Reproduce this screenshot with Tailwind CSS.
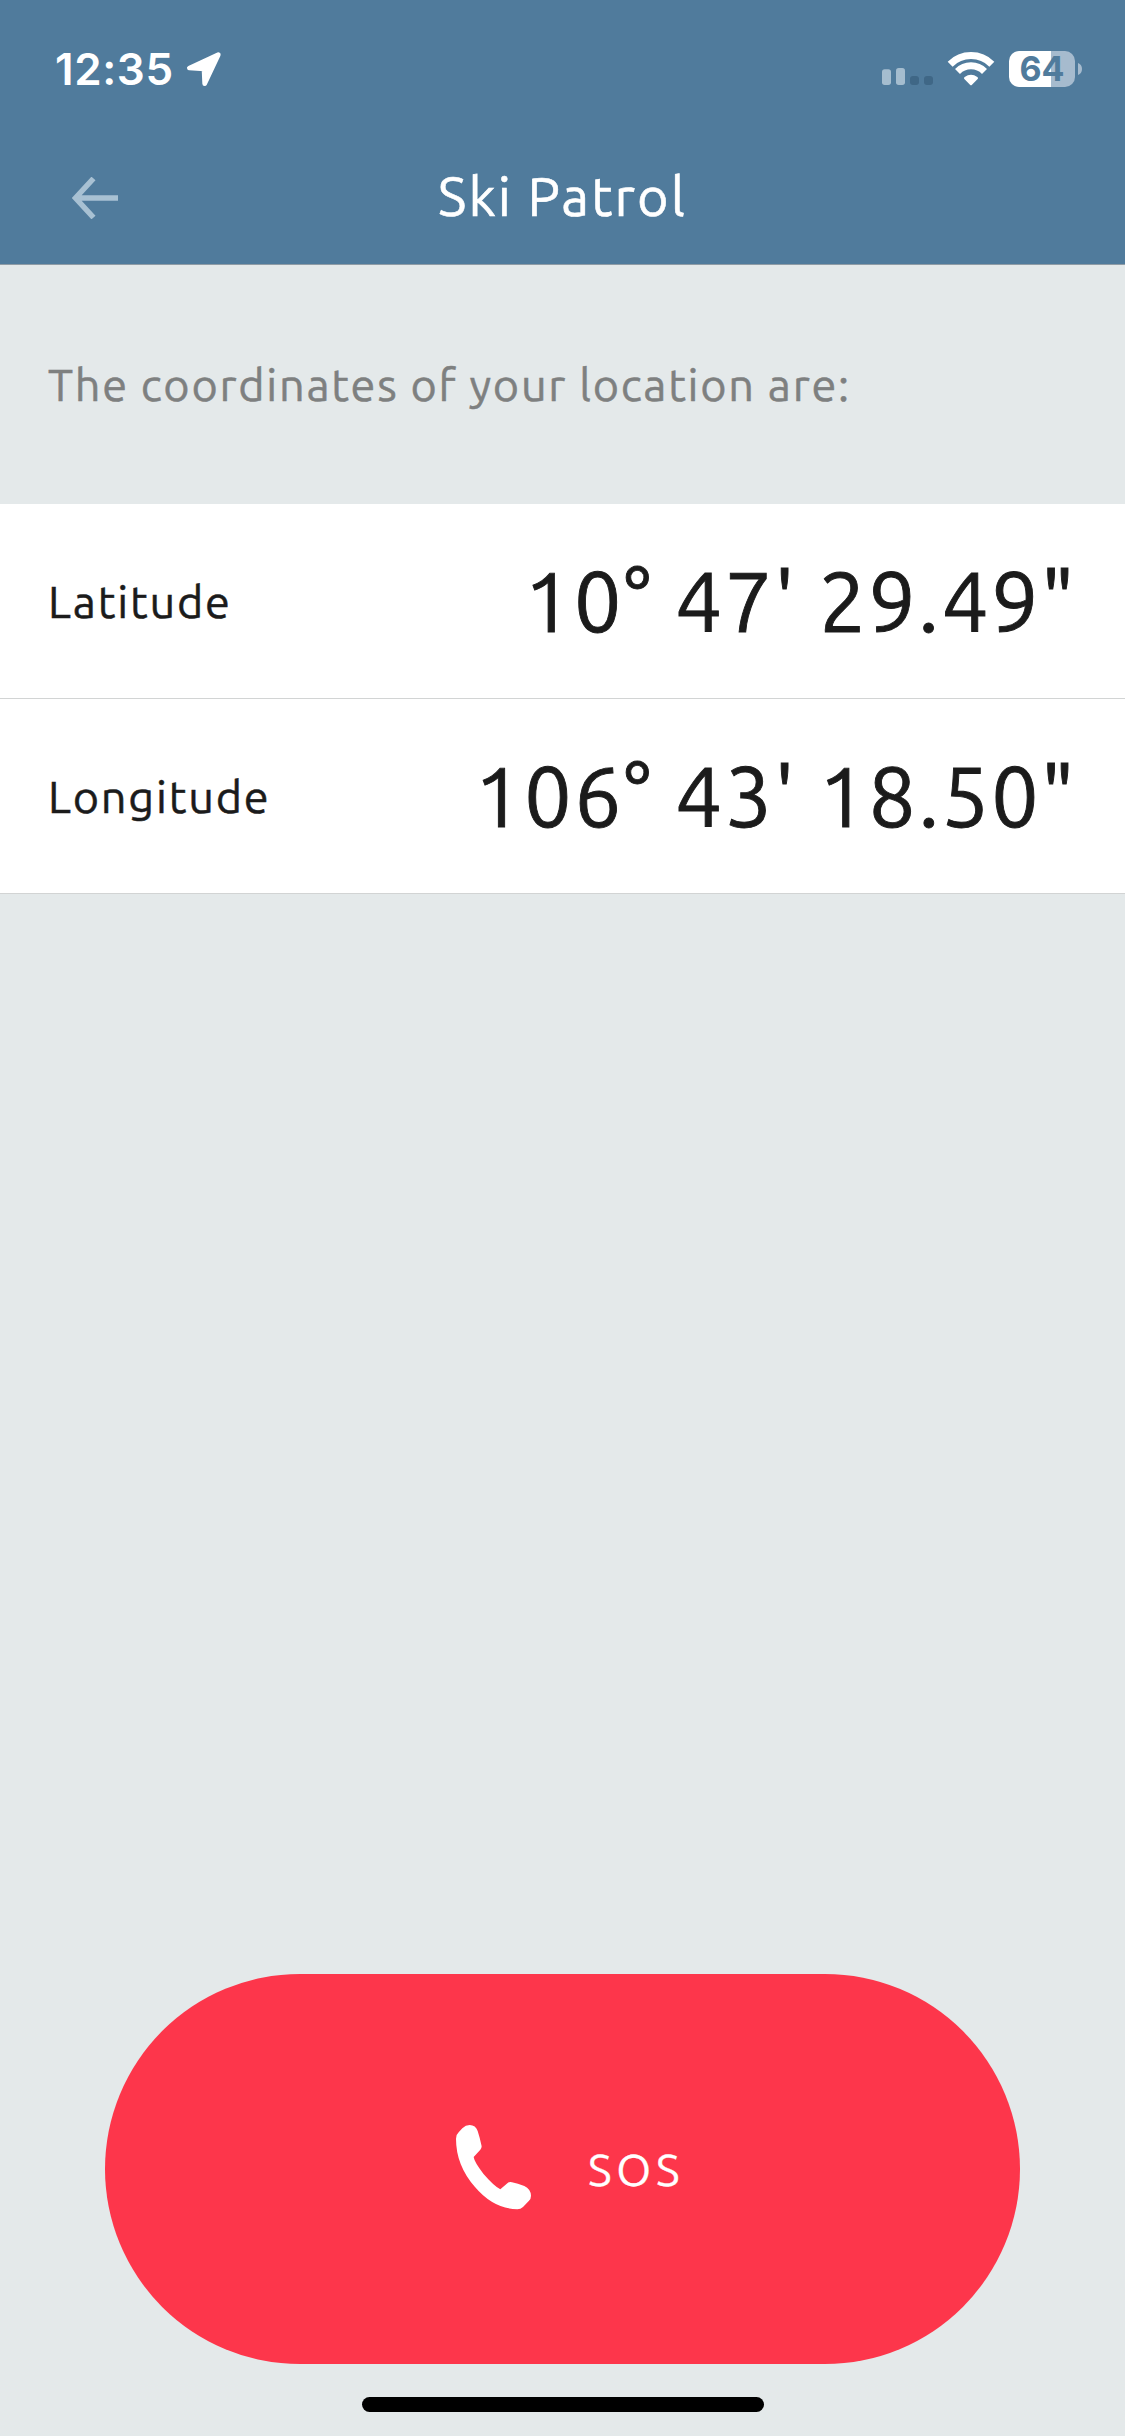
<!DOCTYPE html>
<html lang="en">
<head>
<meta charset="utf-8">
<title>Ski Patrol</title>
<script src="https://cdn.jsdelivr.net/npm/@tailwindcss/browser@4"></script>
</head>
<body class="bg-[#e4e9ea]">
<div class="flex h-[2436px] w-[1125px] flex-col overflow-hidden bg-[#e4e9ea] font-['Ubuntu','Noto_Sans',sans-serif] text-[#1b1b1b]">
  <header class="h-[265px] shrink-0 border-b border-[#8f9ca6] bg-[#507b9c] text-white">
    <!-- Status bar -->
    <div class="flex h-[138px] items-center justify-between pr-[43px] pl-[55px]">
      <div class="flex items-center gap-[12px]">
        <span class="font-['Inter',sans-serif] text-[44px] leading-none font-semibold tracking-[0.6px]">12:35</span>
        <svg class="h-[36px] w-[36px]" viewBox="466 65 108 108" fill="#fff" stroke="#fff" stroke-width="14" stroke-linejoin="round"><path d="M563 76L476 116L520 119L522 163Z"/></svg>
      </div>
      <div class="flex items-center">
        <svg class="h-[36px] w-[140px]" viewBox="66 63 420 108">
          <g fill="#a5bdcf"><rect x="66" y="118" width="27" height="47" rx="8"/><rect x="108" y="114" width="27" height="51" rx="8"/></g>
          <g fill="#3f6786"><rect x="150" y="138" width="27" height="27" rx="9"/><rect x="192" y="138" width="27" height="27" rx="9"/></g>
          <g fill="none" stroke="#fff" stroke-width="21"><path d="M270.500 102.500A88.500 88.500 0 0 1 395.500 102.500"/><path d="M292.500 124.500A57 57 0 0 1 373.500 124.500"/></g>
          <path fill="#fff" d="M313 147Q310 144 314 141Q333 127 352 141Q356 144 353 147L336 164Q333 167 330 164Z"/>
        </svg>
        <div class="-ml-[13px] flex h-[36px] w-[66px] items-center justify-center rounded-[10px] bg-linear-to-r from-white from-[63.5%] to-[#a6bbce] to-[63.5%] font-['Inter',sans-serif] text-[34px] leading-none font-bold text-[#507b9c]">64</div>
        <svg class="ml-[3px] h-[12px] w-[4px]" viewBox="0 0 4 12" fill="#a6bbce"><path d="M0 0Q4 1.500 4 6Q4 10.500 0 12Z"/></svg>
      </div>
    </div>
    <!-- Navigation bar -->
    <div class="grid h-[120px] grid-cols-[1fr_auto_1fr] items-center px-[72px]">
      <svg class="h-[42px] w-[46px]" viewBox="0 0 46 42" fill="none" stroke="#a8c1d3" stroke-width="5.500"><path d="M46 21H6M21.500 1.500L3.500 21L21.500 40.500"/></svg>
      <h1 class="pb-[4px] text-[54px] leading-none tracking-[2.1px] [-webkit-text-stroke:0.6px_currentColor]">Ski Patrol</h1>
      <span></span>
    </div>
  </header>

  <p class="flex h-[239px] shrink-0 items-center pl-[48px] text-[45px] leading-none tracking-[1.74px] text-[#7e8080] [-webkit-text-stroke:0.5px_currentColor]">The coordinates of your location are:</p>

  <dl class="shrink-0 bg-white">
    <div class="flex h-[195px] items-center justify-between border-b border-[#d2d4d4] pr-[48px] pl-[48px]">
      <dt class="text-[45px] leading-none tracking-[1.8px] [-webkit-text-stroke:0.5px_currentColor]">Latitude</dt>
      <dd class="text-[84px] leading-none tracking-[2.4px] [-webkit-text-stroke:0.9px_currentColor]">10° 47' 29.49"</dd>
    </div>
    <div class="flex h-[195px] items-center justify-between border-b border-[#d2d4d4] pr-[48px] pl-[48px]">
      <dt class="text-[45px] leading-none tracking-[1.8px] [-webkit-text-stroke:0.5px_currentColor]">Longitude</dt>
      <dd class="text-[84px] leading-none tracking-[2.4px] [-webkit-text-stroke:0.9px_currentColor]">106° 43' 18.50"</dd>
    </div>
  </dl>

  <div class="mt-auto flex flex-col items-center gap-[33px] pb-[24px]">
    <button class="flex h-[390px] w-[915px] items-center gap-[57px] rounded-full bg-[#fd364b] pl-[351px] text-white">
      <svg class="h-[89px] w-[75px]" viewBox="78 104 225 267" fill="#fff"><path d="M78 145Q78 133 86 126L97 114Q107 104 119 104Q137 104 143 122Q149 140 155 168Q155 173 151 178L131 200Q133 215 160 250Q190 285 211 297L233 278Q238 274 246 276Q263 280 283 287Q302 296 303 316Q303 325 297 331L279 350Q272 357 262 357Q190 355 135 290Q78 225 78 145Z"/></svg>
      <span class="text-[45px] leading-none tracking-[4.75px] [-webkit-text-stroke:0.3px_currentColor]">SOS</span>
    </button>
    <div class="h-[15px] w-[402px] rounded-full bg-black"></div>
  </div>
</div>
</body>
</html>
